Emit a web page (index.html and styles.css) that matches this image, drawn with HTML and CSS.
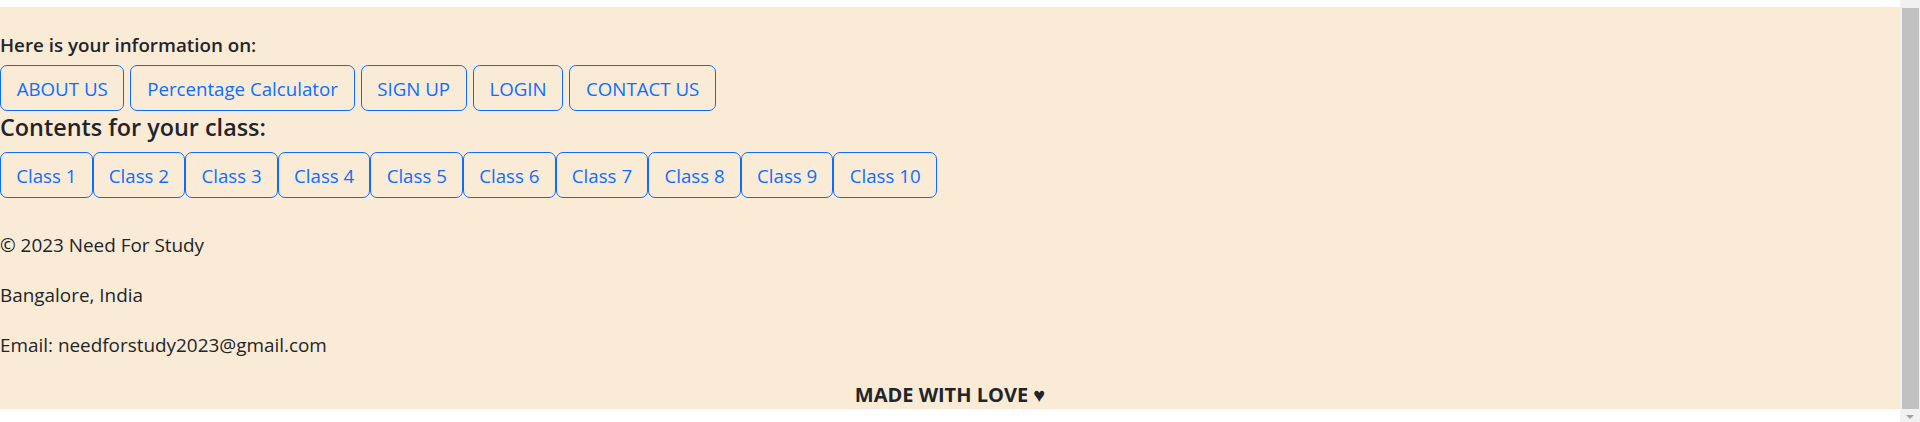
FILE: index.html
```html
<!DOCTYPE html>
<html lang="en">
<head>
<meta charset="utf-8">
<title>Need For Study</title>
<link rel="stylesheet" href="styles.css">
</head>
<body>
<div class="window">
  <div class="page">
    <footer class="footer">
      <p class="info-label">Here is your information on:</p>
      <div class="link-row">
        <a class="btn" href="#">ABOUT US</a>
        <a class="btn" href="#">Percentage Calculator</a>
        <a class="btn" href="#">SIGN UP</a>
        <a class="btn" href="#">LOGIN</a>
        <a class="btn" href="#">CONTACT US</a>
      </div>
      <h5 class="class-heading">Contents for your class:</h5>
      <div class="class-row">
        <a class="btn btn-class" href="#">Class 1</a>
        <a class="btn btn-class" href="#">Class 2</a>
        <a class="btn btn-class" href="#">Class 3</a>
        <a class="btn btn-class" href="#">Class 4</a>
        <a class="btn btn-class" href="#">Class 5</a>
        <a class="btn btn-class" href="#">Class 6</a>
        <a class="btn btn-class" href="#">Class 7</a>
        <a class="btn btn-class" href="#">Class 8</a>
        <a class="btn btn-class" href="#">Class 9</a>
        <a class="btn btn-class" href="#">Class 10</a>
      </div>
      <div class="footer-info">
        <p>© 2023 Need For Study</p>
        <p>Bangalore, India</p>
        <p>Email: needforstudy2023@gmail.com</p>
      </div>
      <p class="made">MADE WITH LOVE ♥</p>
    </footer>
  </div>
  <div class="scrollbar">
    <div class="thumb"></div>
    <div class="arrow"></div>
  </div>
</div>
</body>
</html>
```
FILE: styles.css
```css
html, body {
  margin: 0;
  padding: 0;
  background: #ffffff;
}

body {
  font-family: "Open Sans", "Noto Sans", sans-serif;
  font-size: 18.9px;
  color: #212529;
}

.window {
  display: flex;
  height: 422px;
  overflow: hidden;
}

.page {
  flex: 1;
  padding-top: 7px;
  min-width: 0;
}

.footer {
  background: #faebd7;
  padding-top: 23px;
}

.info-label {
  margin: 0;
  font-size: 18.8px;
  font-weight: 600;
  line-height: 30px;
}

.link-row {
  display: flex;
  gap: 6px;
  margin-top: 5px;
}

.btn {
  box-sizing: border-box;
  height: 46px;
  padding: 8px 15.7px 6px;
  line-height: 30px;
  border: 1px solid #0d6efd;
  border-radius: 7px;
  color: #0d6efd;
  text-decoration: none;
  white-space: nowrap;
  font-size: 18.7px;
}

.btn-class {
  padding-left: 15.2px;
  padding-right: 15.2px;
}

.class-heading {
  margin: 1px 0 10px;
  font-size: 23.4px;
  font-weight: 600;
  line-height: 30px;
}

.class-row {
  display: flex;
}

.footer-info {
  margin-top: 32px;
}

.footer-info p {
  margin: 0 0 20px;
  line-height: 30px;
}

.made {
  margin: 0;
  text-align: center;
  font-size: 20px;
  font-weight: 700;
  line-height: 29px;
}

.scrollbar {
  width: 20px;
  flex: none;
  background: #f1f1f1;
  display: flex;
  flex-direction: column;
  align-items: center;
  padding-top: 8px;
  box-sizing: border-box;
}

.thumb {
  width: 17px;
  height: 401px;
  margin-left: 1px;
  background: #c1c1c1;
}

.arrow {
  margin-top: 6px;
  width: 0;
  height: 0;
  border-left: 4px solid transparent;
  border-right: 4px solid transparent;
  border-top: 4px solid #a3a3a3;
}
```
